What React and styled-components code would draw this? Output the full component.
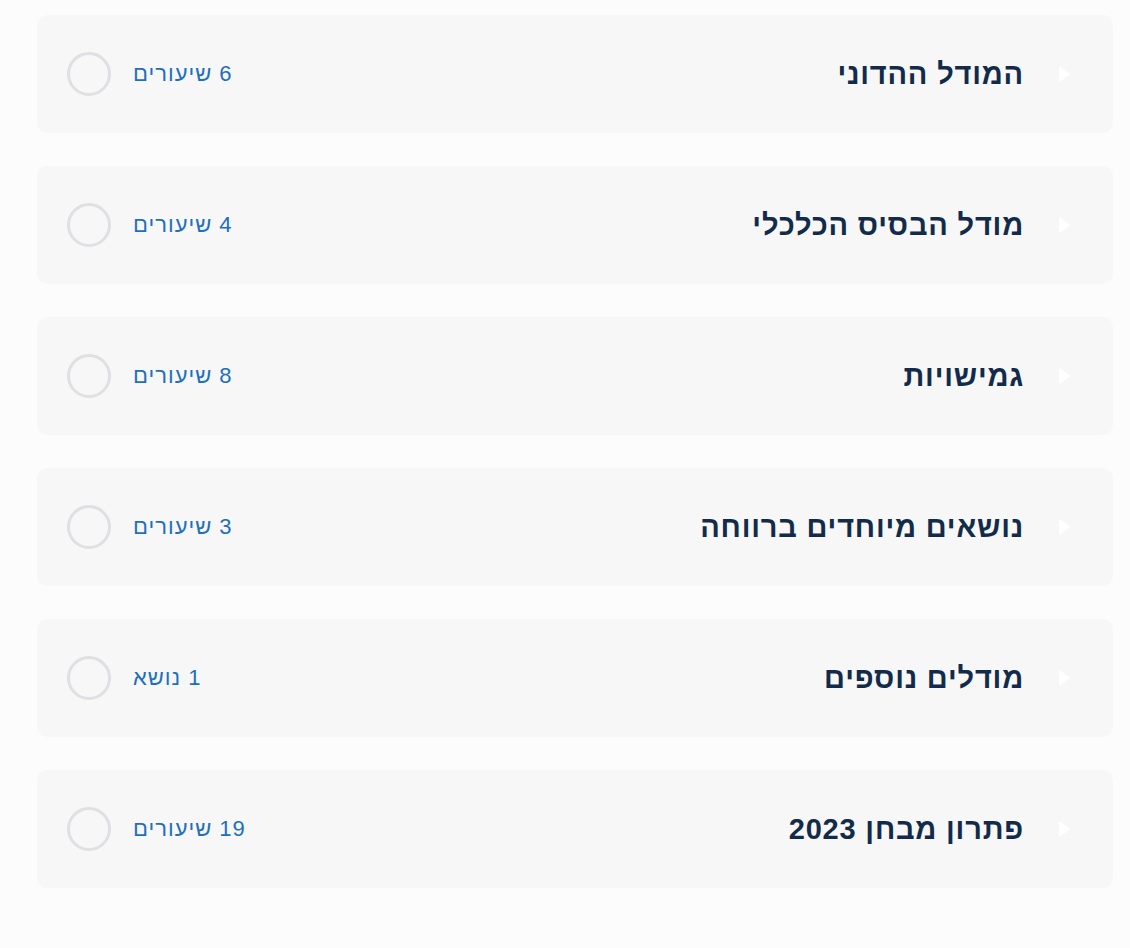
import React from "react";
import styled, { createGlobalStyle } from "styled-components";

const GlobalStyle = createGlobalStyle`
  html, body {
    margin: 0;
    padding: 0;
    background: #fcfcfc;
  }
  body {
    font-family: "Liberation Sans", "DejaVu Sans", Arial, sans-serif;
  }
`;

const modules = [
  { title: "המודל ההדוני", count: "6 שיעורים" },
  { title: "מודל הבסיס הכלכלי", count: "4 שיעורים" },
  { title: "גמישויות", count: "8 שיעורים" },
  { title: "נושאים מיוחדים ברווחה", count: "3 שיעורים" },
  { title: "מודלים נוספים", count: "1 נושא" },
  { title: "פתרון מבחן 2023", count: "19 שיעורים" },
];

const Caret = () => (
  <svg width="14" height="18" viewBox="0 0 14 18">
    <path
      d="M2 2.2 Q2 1 3.1 1.7 L12.6 8.2 Q13.6 9 12.6 9.8 L3.1 16.3 Q2 17 2 15.8 Z"
      fill="#ffffff"
    />
  </svg>
);

const App = () => {
  return (
    <>
      <GlobalStyle />
      <Page dir="rtl">
        {modules.map((m) => (
          <Card key={m.title}>
            <CaretSlot>
              <Caret />
            </CaretSlot>
            <Title>{m.title}</Title>
            <Spacer />
            <Count>{m.count}</Count>
            <Status />
          </Card>
        ))}
      </Page>
    </>
  );
};

export default App;

const Page = styled.div`
  display: flex;
  flex-direction: column;
  gap: 33px;
  padding: 15px 17px 60px 37px;
`;

const Card = styled.div`
  display: flex;
  align-items: center;
  height: 118px;
  box-sizing: border-box;
  padding: 0 42px 0 30px;
  background: #f7f7f7;
  border-radius: 10px;
`;

const CaretSlot = styled.div`
  display: flex;
  align-items: center;
  margin-left: 33px;
`;

const Title = styled.div`
  color: #132b4b;
  font-size: 29px;
  font-weight: 700;
  letter-spacing: 0.8px;
  line-height: 1;
  white-space: nowrap;
`;

const Spacer = styled.div`
  flex: 1;
`;

const Count = styled.div`
  color: #1d6fbf;
  font-size: 22px;
  letter-spacing: 1px;
  line-height: 1;
  white-space: nowrap;
  margin-left: 22px;
`;

const Status = styled.div`
  width: 44px;
  height: 44px;
  box-sizing: border-box;
  border: 3px solid #dfe0e3;
  border-radius: 50%;
  flex-shrink: 0;
`;
